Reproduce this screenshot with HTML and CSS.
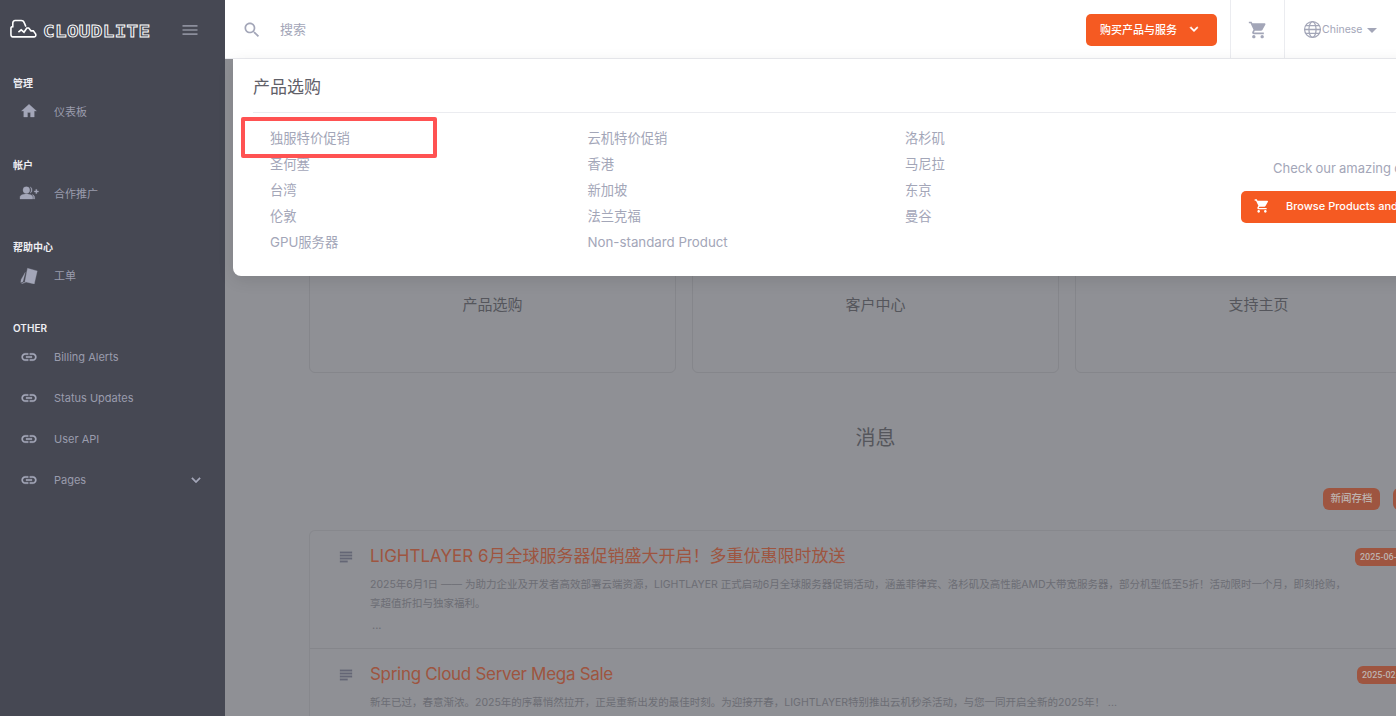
FILE: index.html
```html
<!DOCTYPE html>
<html lang="zh">
<head>
<meta charset="utf-8">
<title>CloudLite</title>
<link rel="stylesheet" href="styles.css">
</head>
<body>
<div class="app">
  <aside class="sidebar">
    <div class="brand">
      <svg class="brand-cloud" viewBox="0 0 30 20"><path d="M8 19H3C1.500 19 1 18 1 16.500V10C1 8.500 2 8 3 8V4C3 2.500 4 1.500 5.500 1.500H12C14 1.500 15 2.500 15.500 4.500L17 8M8 19H26C27.500 19 28 17.500 27.500 16L25 12.500H22.500L20 9.500H18L15 14L12 11.500L9 14" fill="none" stroke="#fff" stroke-width="1.700"/></svg>
      <span class="brand-name">CLOUDLITE</span>
      <svg class="icon brand-menu" viewBox="0 0 24 24"><path d="M3 18h18v-2H3v2zm0-5h18v-2H3v2zm0-7v2h18V6H3z"/></svg>
    </div>
    <nav class="nav">
      <section class="nav-section">
        <h6 class="nav-label">管理</h6>
        <a class="nav-item"><svg class="icon nav-icon" viewBox="0 0 24 24"><path d="M10 20v-6h4v6h5v-8h3L12 3 2 12h3v8z"/></svg><span>仪表板</span></a>
      </section>
      <section class="nav-section">
        <h6 class="nav-label">帐户</h6>
        <a class="nav-item"><svg class="icon nav-icon icon-wide" viewBox="0 0 26 24"><circle cx="9.500" cy="8" r="4.500"/><path d="M1 20v-2.500c0-2.500 4.200-4.200 8.500-4.200s8.500 1.700 8.500 4.200V20z"/><path d="M14.500 3.800a4.600 4.600 0 0 1 0 8.400 7 7 0 0 0 0-8.400zM17 14c2 .6 3.500 1.800 3.500 3.500V20H19v-2.500c0-1.500-.8-2.600-2-3.500zM20 9.200h2V7.200h1.600v2h2v1.600h-2v2H22v-2h-2z"/></svg><span>合作推广</span></a>
      </section>
      <section class="nav-section">
        <h6 class="nav-label">帮助中心</h6>
        <a class="nav-item"><svg class="icon nav-icon" viewBox="0 -1.500 24 24"><path d="M10 1.500L23 5 19 22.500 6.500 19.500z"/><path d="M7 7L3.800 19.500 1 20.500 1.500 16.500zM4.500 20.500L7.500 20.500 2 22z"/></svg><span>工单</span></a>
      </section>
      <section class="nav-section nav-section-other">
        <h6 class="nav-label">OTHER</h6>
        <a class="nav-item"><svg class="icon nav-icon" viewBox="0 0 24 24"><path d="M3.900 12c0-1.710 1.390-3.100 3.100-3.100h4V7H7c-2.760 0-5 2.240-5 5s2.240 5 5 5h4v-1.900H7c-1.710 0-3.100-1.390-3.100-3.100zM8 13h8v-2H8v2zm9-6h-4v1.900h4c1.710 0 3.100 1.390 3.100 3.100s-1.390 3.100-3.100 3.100h-4V17h4c2.760 0 5-2.240 5-5s-2.240-5-5-5z"/></svg><span>Billing Alerts</span></a>
        <a class="nav-item"><svg class="icon nav-icon" viewBox="0 0 24 24"><path d="M3.900 12c0-1.710 1.390-3.100 3.100-3.100h4V7H7c-2.760 0-5 2.240-5 5s2.240 5 5 5h4v-1.900H7c-1.710 0-3.100-1.390-3.100-3.100zM8 13h8v-2H8v2zm9-6h-4v1.900h4c1.710 0 3.100 1.390 3.100 3.100s-1.390 3.100-3.100 3.100h-4V17h4c2.760 0 5-2.240 5-5s-2.240-5-5-5z"/></svg><span>Status Updates</span></a>
        <a class="nav-item"><svg class="icon nav-icon" viewBox="0 0 24 24"><path d="M3.900 12c0-1.710 1.390-3.100 3.100-3.100h4V7H7c-2.760 0-5 2.240-5 5s2.240 5 5 5h4v-1.900H7c-1.710 0-3.100-1.390-3.100-3.100zM8 13h8v-2H8v2zm9-6h-4v1.900h4c1.710 0 3.100 1.390 3.100 3.100s-1.390 3.100-3.100 3.100h-4V17h4c2.760 0 5-2.240 5-5s-2.240-5-5-5z"/></svg><span>User API</span></a>
        <a class="nav-item"><svg class="icon nav-icon" viewBox="0 0 24 24"><path d="M3.900 12c0-1.710 1.390-3.100 3.100-3.100h4V7H7c-2.760 0-5 2.240-5 5s2.240 5 5 5h4v-1.900H7c-1.710 0-3.100-1.390-3.100-3.100zM8 13h8v-2H8v2zm9-6h-4v1.900h4c1.710 0 3.100 1.390 3.100 3.100s-1.390 3.100-3.100 3.100h-4V17h4c2.760 0 5-2.240 5-5s-2.240-5-5-5z"/></svg><span>Pages</span><svg class="icon nav-caret" viewBox="0 0 24 24"><path d="M16.590 8.590L12 13.170 7.410 8.590 6 10l6 6 6-6z"/></svg></a>
      </section>
    </nav>
  </aside>

  <div class="main">
    <header class="topbar">
      <svg class="icon search-icon" viewBox="0 0 24 24"><path d="M15.500 14h-.79l-.28-.27C15.410 12.590 16 11.110 16 9.500 16 5.910 13.090 3 9.500 3S3 5.910 3 9.500 5.910 16 9.500 16c1.610 0 3.090-.59 4.230-1.570l.27.28v.79l5 4.990L20.490 19l-4.990-5zm-6 0C7.010 14 5 11.990 5 9.500S7.010 5 9.500 5 14 7.010 14 9.500 11.990 14 9.500 14z"/></svg>
      <span class="search-text">搜索</span>
      <a class="buy-btn"><span>购买产品与服务</span><svg class="icon buy-caret" viewBox="0 0 24 24"><path d="M16.590 8.590L12 13.170 7.410 8.590 6 10l6 6 6-6z"/></svg></a>
      <div class="cart-cell"><svg class="icon cart-icon" viewBox="0 0 24 24"><path d="M7 18c-1.100 0-1.990.9-1.990 2S5.900 22 7 22s2-.9 2-2-.9-2-2-2zM1 2v2h2l3.600 7.590-1.350 2.450c-.16.28-.25.61-.25.96 0 1.100.9 2 2 2h12v-2H7.420c-.14 0-.25-.11-.25-.25l.03-.12.9-1.630h7.450c.75 0 1.410-.41 1.750-1.030l3.580-6.490c.08-.14.12-.31.12-.48 0-.55-.45-1-1-1H5.210l-.94-2H1zm16 16c-1.100 0-1.990.9-1.990 2s.89 2 1.990 2 2-.9 2-2-.9-2-2-2z"/></svg></div>
      <div class="lang-cell">
        <svg class="lang-globe" viewBox="0 0 24 24"><circle cx="12" cy="12" r="10"/><ellipse cx="12" cy="12" rx="4.500" ry="10"/><path d="M2 12h20M3.500 7h17M3.500 17h17"/></svg>
        <span>Chinese</span><i class="lang-caret"></i>
      </div>
    </header>

    <div class="content">
      <div class="tiles">
        <div class="tile">产品选购</div>
        <div class="tile">客户中心</div>
        <div class="tile">支持主页</div>
      </div>
      <h2 class="news-heading">消息</h2>
      <div class="news-actions">
        <a class="pill">新闻存档</a>
        <a class="pill">查看全部</a>
      </div>
      <div class="news-list">
        <article class="news-item">
          <svg class="icon news-icon" viewBox="0 0 24 24"><path d="M14 17H4v2h10v-2zm6-8H4v2h16V9zM4 15h16v-2H4v2zM4 5v2h16V5H4z"/></svg>
          <div class="news-body">
            <h3 class="news-title">LIGHTLAYER 6月全球服务器促销盛大开启！多重优惠限时放送</h3>
            <p class="news-text">2025年6月1日 —— 为助力企业及开发者高效部署云端资源，LIGHTLAYER 正式启动6月全球服务器促销活动，涵盖菲律宾、洛杉矶及高性能AMD大带宽服务器，部分机型低至5折！活动限时一个月，即刻抢购，<br>享超值折扣与独家福利。</p>
            <p class="news-more">...</p>
          </div>
          <span class="date-badge">2025-06-01</span>
        </article>
        <article class="news-item">
          <svg class="icon news-icon" viewBox="0 0 24 24"><path d="M14 17H4v2h10v-2zm6-8H4v2h16V9zM4 15h16v-2H4v2zM4 5v2h16V5H4z"/></svg>
          <div class="news-body">
            <h3 class="news-title news-title-latin">Spring Cloud Server Mega Sale</h3>
            <p class="news-text">新年已过，春意渐浓。2025年的序幕悄然拉开，正是重新出发的最佳时刻。为迎接开春，LIGHTLAYER特别推出云机秒杀活动，与您一同开启全新的2025年！ ...</p>
          </div>
          <span class="date-badge date-badge-late">2025-02-01</span>
        </article>
      </div>
    </div>

    <div class="dropdown">
      <h4 class="dropdown-title">产品选购</h4>
      <div class="dropdown-row">
        <div class="dropdown-grid">
          <a>独服特价促销</a><a>云机特价促销</a><a>洛杉矶</a>
          <a>圣何塞</a><a>香港</a><a>马尼拉</a>
          <a>台湾</a><a>新加坡</a><a>东京</a>
          <a>伦敦</a><a>法兰克福</a><a>曼谷</a>
          <a>GPU服务器</a><a>Non-standard Product</a>
        </div>
        <div class="dropdown-promo">
          <p class="promo-text">Check our amazing offers</p>
          <a class="promo-btn"><svg class="icon promo-cart" viewBox="0 0 24 24"><path d="M7 18c-1.100 0-1.990.9-1.990 2S5.900 22 7 22s2-.9 2-2-.9-2-2-2zM1 2v2h2l3.600 7.590-1.350 2.450c-.16.28-.25.61-.25.96 0 1.100.9 2 2 2h12v-2H7.420c-.14 0-.25-.11-.25-.25l.03-.12.9-1.630h7.450c.75 0 1.410-.41 1.750-1.030l3.580-6.490c.08-.14.12-.31.12-.48 0-.55-.45-1-1-1H5.210l-.94-2H1zm16 16c-1.100 0-1.990.9-1.990 2s.89 2 1.990 2 2-.9 2-2-.9-2-2-2z"/></svg><span>Browse Products and Services</span></a>
        </div>
      </div>
      <div class="annotation"></div>
    </div>
  </div>
</div>
</body>
</html>
```

FILE: styles.css
```css
* { box-sizing: border-box; }
html, body { margin: 0; height: 100%; overflow: hidden; }
body {
  font-family: Inter, "Noto Sans CJK SC", sans-serif;
  background: #8f9095;
}
h2, h3, h4, h6, p { margin: 0; font-weight: 400; }
.icon { fill: currentColor; display: block; flex: none; }

.app { display: flex; width: 1525px; height: 716px; }

.sidebar { width: 225px; flex: none; background: #464853; color: #9a9cad; }
.brand { height: 59px; display: flex; align-items: center; padding-left: 10px; }
.brand-cloud { width: 28px; height: 19px; flex: none; margin-top: -3px; }
.brand-name {
  margin-left: 5px;
  width: 114px;
  font: 700 15.500px/20px "DejaVu Sans Mono", monospace;
  letter-spacing: 0.300px;
  color: #464853;
  -webkit-text-stroke: 0.800px #fff;
  white-space: nowrap;
  transform: scaleX(1.240);
  transform-origin: left center;
  margin-top: 4px;
}
.brand-menu { width: 20px; height: 20px; margin-left: 23px; color: #8c8e9c; }
.nav { padding-top: 14px; }
.nav-section { padding-bottom: 24px; }
.nav-section-other { margin-top: -1px; }
.nav-label {
  height: 20px;
  margin-bottom: -3px;
  padding-left: 13px;
  font-size: 10px;
  line-height: 20px;
  font-weight: 600;
  color: #eeeef2;
}
.nav-item {
  height: 41px;
  display: flex;
  align-items: center;
  padding-left: 20px;
  font-size: 11px;
  color: #9a9cad;
}
.nav-section-other .nav-label { margin-bottom: -2px; }
.nav-icon { width: 18px; height: 18px; margin-right: 16px; color: #a3a6b8; stroke: currentColor; stroke-width: 0.400; }
.icon-wide { width: 20px; margin-left: -1px; margin-right: 15px; }
.nav-caret { width: 18px; height: 18px; margin-left: auto; margin-right: 20px; color: #a3a6b8; stroke: currentColor; stroke-width: 0.500; }

.main { position: relative; width: 1300px; flex: none; }
.topbar {
  height: 59px;
  display: flex;
  align-items: center;
  background: #fff;
  border-bottom: 1px solid #ebecf0;
  padding-left: 17px;
  color: #a3a6b8;
}
.search-icon { width: 20px; height: 20px; margin-top: 1px; }
.search-text { margin-left: 18px; margin-top: -1px; font-size: 13px; color: #a3a6b8; }
.buy-btn {
  margin-left: 780px;
  margin-top: 1px;
  width: 131px;
  height: 32px;
  display: flex;
  align-items: center;
  padding: 0 0 2px 14px;
  background: #f55a22;
  border-radius: 5px;
  color: #fff;
  font-size: 11px;
  font-weight: 500;
  flex: none;
}
.buy-caret { width: 16px; height: 16px; margin-left: 9px; stroke: currentColor; stroke-width: 0.800; }
.cart-cell {
  margin-left: 13px;
  width: 55px;
  height: 58px;
  display: flex;
  align-items: center;
  justify-content: center;
  border-left: 1px solid #ebecf0;
  border-right: 1px solid #ebecf0;
  flex: none;
}
.cart-icon { width: 20px; height: 20px; margin-top: 1px; }
.lang-cell { display: flex; align-items: center; padding-left: 18px; font-size: 10.500px; color: #a3a6b8; flex: none; }
.lang-globe { width: 19px; height: 19px; fill: none; stroke: #a3a6b8; stroke-width: 1.600; margin-top: 1px; }
.lang-caret {
  margin-left: 5px;
  margin-top: 2px;
  border: 5px solid transparent;
  border-top-color: #a3a6b8;
  border-bottom-width: 0;
}

.content { padding: 0 83px 0 84px; }
.tiles { display: grid; grid-template-columns: repeat(3, 367px); column-gap: 16px; padding-top: 171px; }
.tile {
  height: 143px;
  padding-top: 64px;
  text-align: center;
  font-size: 15px;
  line-height: 20px;
  color: #55565c;
  border: 1px solid #85868b;
  border-radius: 6px;
}
.news-heading { margin-top: 51px; text-align: center; font-size: 20px; line-height: 28px; color: #55565c; }
.news-actions { display: flex; gap: 13px; margin-top: 36px; padding-left: 1014px; }
.pill {
  width: 57px;
  height: 22px;
  flex: none;
  background: #9e5540;
  border-radius: 6px;
  color: #bdb2ae;
  font-size: 10.500px;
  font-weight: 500;
  line-height: 22px;
  text-align: center;
}
.news-list { margin-top: 20px; border: 1px solid #87888d; border-bottom: 0; border-radius: 6px 6px 0 0; }
.news-item {
  position: relative;
  height: 118px;
  display: flex;
  padding: 15px 0 0 27px;
  border-bottom: 1px solid #85868b;
}
.news-icon { width: 18px; height: 18px; margin-top: 2px; color: #666877; stroke: currentColor; stroke-width: 0.400; }
.news-body { margin-left: 15px; width: 985px; }
.news-title { font-size: 17px; line-height: 20px; color: #9e5540; white-space: nowrap; }
.news-title-latin { letter-spacing: -0.300px; }
.news-text { margin-top: 9px; font-size: 10.500px; line-height: 19px; color: #6c6d74; }
.news-more { margin-top: 3px; font-size: 11px; line-height: 19px; color: #6c6d74; padding-left: 2px; }
.date-badge {
  position: absolute;
  right: 29px;
  top: 17px;
  height: 18px;
  padding: 0 5px;
  background: #9e5540;
  border-radius: 6px;
  color: #bdb2ae;
  font-family: Roboto, sans-serif;
  font-size: 9px;
  font-weight: 500;
  line-height: 18px;
}
.date-badge-late { right: 27px; }

.dropdown {
  position: absolute;
  left: 8px;
  top: 59px;
  width: 1292px;
  height: 217px;
  background: #fff;
  border-radius: 0 0 8px 8px;
  box-shadow: 0 4px 16px rgba(0, 0, 0, 0.1);
}
.dropdown-title {
  margin-left: 20px;
  height: 54px;
  padding-top: 17px;
  font-size: 17px;
  line-height: 22px;
  color: #5f6068;
  border-bottom: 1px solid #ebecf0;
}
.dropdown-row { display: flex; }
.dropdown-grid {
  width: 1008px;
  flex: none;
  align-self: flex-start;
  display: grid;
  grid-template-columns: repeat(3, 317.500px);
  grid-auto-rows: 26px;
  padding: 12px 0 0 37px;
  font-size: 13.300px;
  line-height: 26px;
  color: #a3a6b8;
}
.dropdown-grid a { transform: translateY(-0.500px); }
.dropdown-promo { padding-top: 45px; }
.promo-text { margin-left: 32px; font-size: 13px; line-height: 20px; word-spacing: -0.500px; color: #a3a6b8; white-space: nowrap; }
.promo-btn {
  margin-top: 13px;
  width: 240px;
  height: 32px;
  display: flex;
  align-items: center;
  padding: 0 0 2px 13px;
  background: #f55a22;
  border-radius: 5px;
  color: #fff;
  font-size: 11px;
  font-weight: 500;
  white-space: nowrap;
}
.promo-cart { width: 16px; height: 16px; margin-right: 16px; }
.annotation {
  position: absolute;
  left: 8px;
  top: 58px;
  width: 196px;
  height: 41px;
  border: 4px solid #ff5252;
  border-radius: 2px;
}
```
